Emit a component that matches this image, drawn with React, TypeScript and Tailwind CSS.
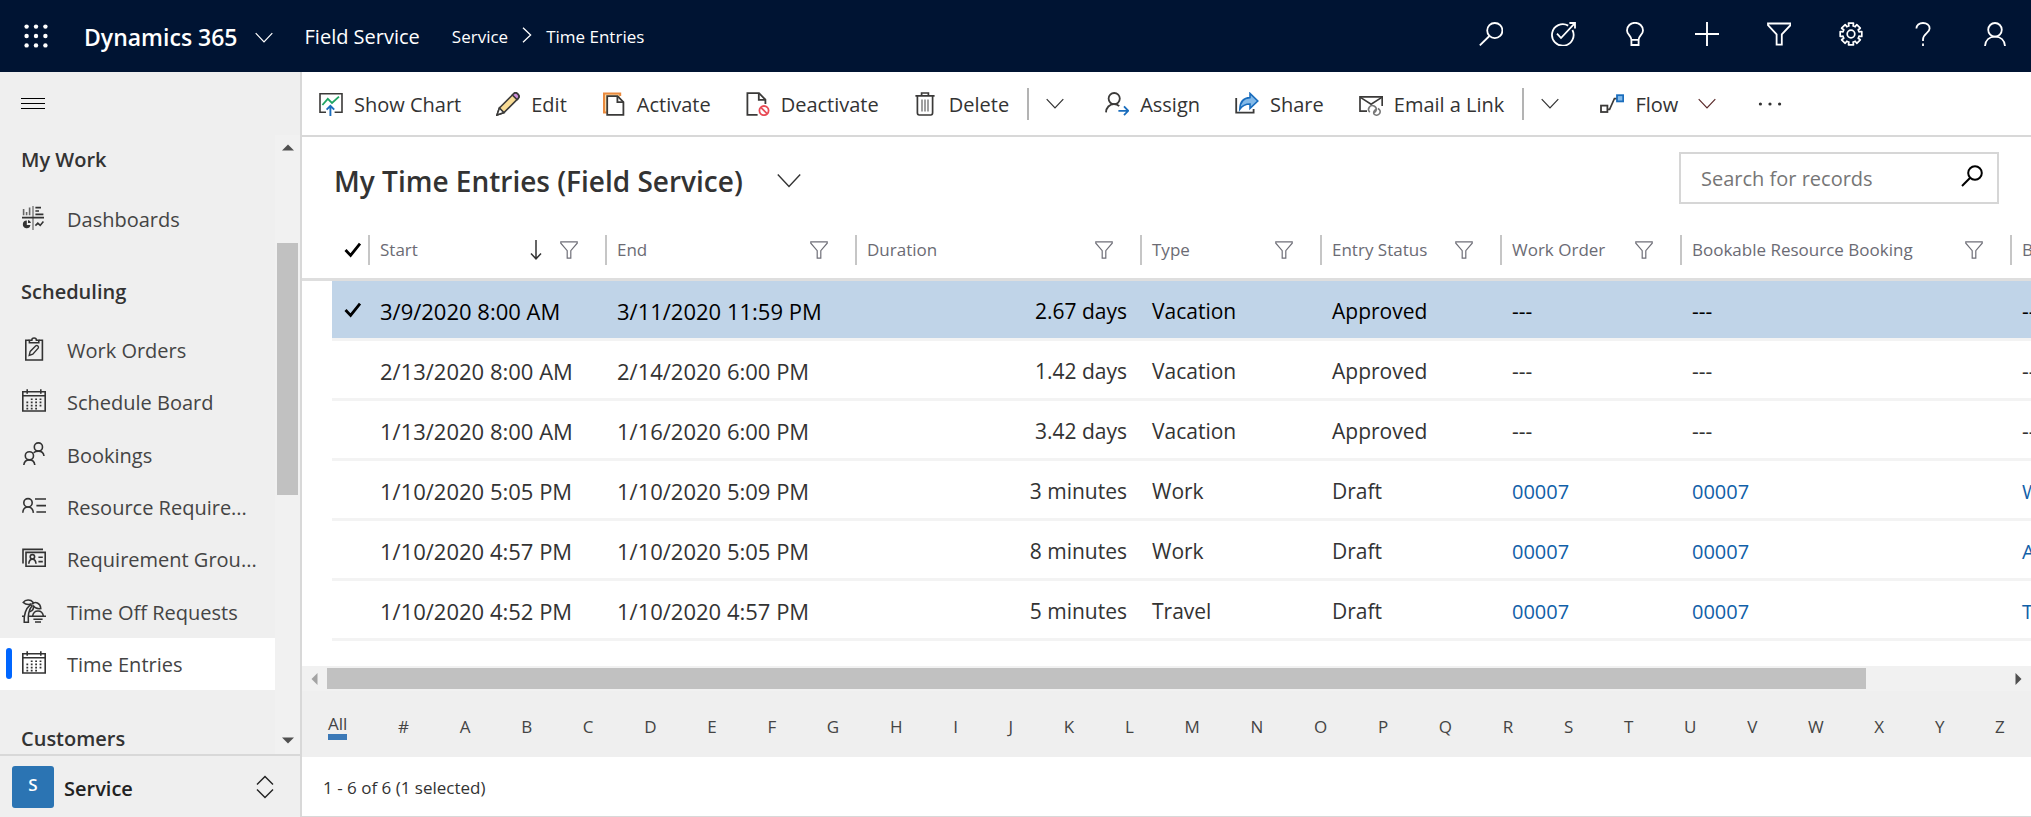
import type { ReactNode } from "react";
import clsx from "clsx";

type IconProps = { children: ReactNode; className?: string; w?: number; h?: number; sw?: number };

function Icon({ children, className, w = 24, h = 24, sw = 1.6 }: IconProps) {
  return (
    <svg
      width={w}
      height={h}
      viewBox={`0 0 ${w} ${h}`}
      fill="none"
      stroke="currentColor"
      strokeWidth={sw}
      aria-hidden="true"
      className={clsx("block shrink-0", className)}
    >
      {children}
    </svg>
  );
}

const ChevronDown = ({ className }: { className?: string }) => (
  <Icon w={18} h={12} sw={1.2} className={className}>
    <path d="M0.7 1.2 9 10 17.3 1.2" />
  </Icon>
);

const Funnel = () => (
  <Icon w={18} h={18} sw={1.2} className="text-[#6f6f78]">
    <path d="M0.8 0.8H17.2V2.2L10.8 9.6V17.2H7.2V9.6L0.8 2.2Z" />
  </Icon>
);

const Check = () => (
  <Icon w={18} h={16} sw={2.8} className="text-black">
    <path d="M1.5 8 6.6 13.4 16 1.6" />
  </Icon>
);

const topActions: { label: string; icon: ReactNode }[] = [
  {
    label: "Search",
    icon: (
      <Icon sw={1.8}>
        <circle cx="15.8" cy="8.6" r="7.6" />
        <path d="M10.4 14 0.8 23.4" />
      </Icon>
    ),
  },
  {
    label: "Task flow",
    icon: (
      <Icon w={26} h={24} sw={1.8}>
        <path d="M18.2 3.6A10.8 10.8 0 1 0 22.4 8" />
        <path d="M7 11.6 11 16 24.2 1.8M19.4 1H25V6.6" />
      </Icon>
    ),
  },
  {
    label: "Assistant",
    icon: (
      <Icon w={18} sw={1.8}>
        <path d="M5.4 17.8C5.4 13.6 1 12.6 1 8.4A8 7.6 0 0 1 17 8.4C17 12.6 12.6 13.6 12.6 17.8ZM5.4 17.8V23H12.6V17.8" />
      </Icon>
    ),
  },
  {
    label: "Quick create",
    icon: (
      <Icon sw={1.9}>
        <path d="M12 0V24M0 12H24" />
      </Icon>
    ),
  },
  {
    label: "Advanced find",
    icon: (
      <Icon sw={1.8}>
        <path d="M1 1.5H23.4V3.2L14.8 12.4V22.6H9.6V12.4L1 3.2Z" />
      </Icon>
    ),
  },
  {
    label: "Settings",
    icon: (
      <Icon sw={1.7}>
        <path d="M9.9 4 9.5 1.2 14.5 1.2 14.1 4A8.3 8.3 0 0 1 16.2 4.8L17.8 2.6 21.3 6.2 19.2 7.8A8.3 8.3 0 0 1 20 9.9L22.8 9.5 22.8 14.5 20 14.1A8.3 8.3 0 0 1 19.2 16.2L21.3 17.8 17.8 21.3 16.2 19.2A8.3 8.3 0 0 1 14.1 20L14.5 22.8 9.5 22.8 9.9 20A8.3 8.3 0 0 1 7.8 19.2L6.2 21.3 2.6 17.8 4.8 16.2A8.3 8.3 0 0 1 4 14.1L1.2 14.5 1.2 9.5 4 9.9A8.3 8.3 0 0 1 4.8 7.8L2.6 6.2 6.2 2.6 7.8 4.8A8.3 8.3 0 0 1 9.9 4Z" strokeLinejoin="round" />
        <circle cx="12" cy="12" r="3.8" />
      </Icon>
    ),
  },
  {
    label: "Help",
    icon: (
      <Icon w={16} sw={1.8}>
        <path d="M1.4 6.6C1.4 3.2 4.2 1 8 1S14.6 3.2 14.6 6.4C14.6 11 8 11.4 8 17.6V19M8 21.4V24" />
      </Icon>
    ),
  },
  {
    label: "Account",
    icon: (
      <Icon w={22} sw={1.8}>
        <circle cx="11" cy="7.8" r="6.8" />
        <path d="M1 24C1.4 18 5.4 14.6 11 14.6S20.6 18 21 24" />
      </Icon>
    ),
  },
];

const ic = {
  chart: (
    <Icon className="text-[#3b3a39]">
      <path d="M7 20.2H1V1.8H23V20.2H15.6" />
      <path d="M3.4 13 8.8 6.8 13 11 20 4.6" stroke="#1fa463" strokeWidth="1.8" />
      <path d="M11.4 24V14M7.6 17.6 11.4 13.8 15.2 17.6" stroke="#1a6dbd" strokeWidth="1.9" />
    </Icon>
  ),
  edit: (
    <Icon className="text-[#3b3a39]">
      <path d="M3.4 16 17.4 2C18.6 0.8 20.4 0.7 21.8 2.1S23.2 5.4 22 6.6L8 20.6 1 23Z" fill="#f9dc95" />
      <path d="M16.4 3 17.4 2C18.6 0.8 20.4 0.7 21.8 2.1S23.2 5.4 22 6.6L21 7.6Z" fill="#cf8fdc" />
      <path d="M3.4 16 1 23 8 20.6Z" fill="#fff" />
    </Icon>
  ),
  activate: (
    <Icon className="text-[#3b3a39]">
      <path d="M4.6 20.4H2V1.4H18.2V4" stroke="#ea8a3e" strokeWidth="2" fill="#fbd9a5" />
      <path d="M5.2 4.2H15.6L21.4 10V22.8H5.2Z" fill="#fff" strokeWidth="1.8" />
      <path d="M15.4 4.2V10.2H21.4" strokeWidth="1.8" />
    </Icon>
  ),
  deactivate: (
    <Icon className="text-[#3b3a39]">
      <path d="M11.6 22.8H1.4V1.2H13L19.4 7.6V12" strokeWidth="1.8" />
      <path d="M12.8 1.2V7.8H19.4" strokeWidth="1.8" />
      <circle cx="18" cy="18.6" r="4.6" stroke="#e84a55" strokeWidth="1.8" />
      <path d="M14.8 15.4 21.2 21.8" stroke="#e84a55" strokeWidth="1.8" />
    </Icon>
  ),
  trash: (
    <Icon className="text-[#3b3a39]">
      <path d="M1.4 3.8H20.6M7.6 3.6V1H14.4V3.6M3.4 4V20.8Q3.4 23 5.2 23H16.8Q18.6 23 18.6 20.8V4" strokeWidth="1.7" />
      <path d="M8 7.6V19.4M11 7.6V19.4M14 7.6V19.4" stroke="#777" strokeWidth="1.4" />
    </Icon>
  ),
  assign: (
    <Icon className="text-[#3b3a39]">
      <circle cx="9.2" cy="6.6" r="5.6" strokeWidth="1.8" />
      <path d="M1 20.4C1.2 15.6 4.4 12.2 9 12.2 11.4 12.2 13 13 14.2 14.2" strokeWidth="1.8" />
      <path d="M13.4 18.8H23M19 14.4 23.2 18.8 19 23.2" stroke="#1a6dbd" strokeWidth="1.8" />
    </Icon>
  ),
  share: (
    <Icon className="text-[#3b3a39]">
      <path d="M1.2 6V20.6H18.6V17" strokeWidth="1.8" />
      <path d="M4.8 17.2C5 9.6 9 5.8 15 5.6V1.4L22.8 9 15 16.4V12C10.6 12 7.4 13.4 4.8 17.2Z" fill="#83b9e8" stroke="#1a6dbd" />
    </Icon>
  ),
  mail: (
    <Icon className="text-[#3b3a39]">
      <path d="M8 19.2H1V4.8H23.2V14" strokeWidth="1.7" />
      <path d="M1.4 5.4 12.1 12.2 22.8 5.4" />
      <path d="M10.8 20.2A3.8 3.8 0 1 1 17 18.6C16.6 19.6 15.8 20.2 14.8 20.4" stroke="#777" />
      <path d="M18.8 16.4A3.5 3.5 0 1 1 15 22C14.2 20.2 15.2 18 17.2 17.6" stroke="#777" />
    </Icon>
  ),
  flow: (
    <Icon className="text-[#3b3a39]">
      <rect x="1" y="13.6" width="6.4" height="6.4" strokeWidth="1.8" />
      <path d="M7.8 17.4H9.6L14.4 6.6H17" />
      <rect x="17" y="3.2" width="6.2" height="6.2" fill="#83b9e8" stroke="#1a6dbd" strokeWidth="1.8" />
    </Icon>
  ),
};

function Command({ icon, label }: { icon: ReactNode; label: string }) {
  return (
    <button type="button" className="flex items-center gap-[11px] whitespace-nowrap">
      {icon}
      <span className="pt-[2px]">{label}</span>
    </button>
  );
}

function Split({ label }: { label: string }) {
  return (
    <div className="flex items-center">
      <span className="ml-[18px] h-8 w-[2px] bg-[#b3b3b3]" />
      <button type="button" aria-label={label} className="flex h-8 w-13 items-center justify-center">
        <ChevronDown />
      </button>
    </div>
  );
}

const calendar = (
  <Icon>
    <path d="M0.8 2.8H23.2V22H0.8ZM0.8 6.8H23.2M5.2 0.2V4.8M18.8 0.2V4.8" />
    <path d="M8.8 10.2H10.6M13.2 10.2H15M17.6 10.2H19.4M4.4 13.4H6.2M8.8 13.4H10.6M13.2 13.4H15M17.6 13.4H19.4M4.4 16.6H6.2M8.8 16.6H10.6M13.2 16.6H15M17.6 16.6H19.4M4.4 19.6H6.2M8.8 19.6H10.6M13.2 19.6H15" />
  </Icon>
);

const schedulingItems: { label: string; icon: ReactNode; active?: boolean }[] = [
  {
    label: "Work Orders",
    icon: (
      <Icon>
        <path d="M7.4 3.2H3.8V23H20.4V3.2H16.8" />
        <path d="M7.4 5.8V3.2H9.8C9.8 0.2 14.4 0.2 14.4 3.2H16.8V5.8Z" />
        <path d="M7.2 18.4 8.2 14.4 13.8 8.8C15.2 7.8 17.2 9.6 16.2 11.2L10.8 17.2Z" strokeWidth="1.4" />
      </Icon>
    ),
  },
  { label: "Schedule Board", icon: calendar },
  {
    label: "Bookings",
    icon: (
      <Icon>
        <circle cx="16.4" cy="5" r="4.1" />
        <circle cx="7.4" cy="13.8" r="4.1" />
        <path d="M1.8 23C2.2 19.8 4.2 17.9 7.4 17.9S12.4 19.8 12.8 23M11.6 10.8C12.8 9.6 14.4 9.1 16.4 9.1 19.6 9.1 21.6 11 22 14" />
      </Icon>
    ),
  },
  {
    label: "Resource Require...",
    icon: (
      <Icon>
        <circle cx="6" cy="8.8" r="4.2" />
        <path d="M0.8 18.8C1 15.4 3 13 6 13S11 15.4 11.4 18.8M13 5H24M14.4 11.6H24M14.4 18H24" />
      </Icon>
    ),
  },
  {
    label: "Requirement Grou...",
    icon: (
      <Icon>
        <path d="M4 6.4H23.2V20.2H4ZM1 17.4V3.4H21" />
        <circle cx="10.4" cy="10.8" r="2.2" />
        <path d="M6.8 17.8C7 14.8 8.4 13.2 10.4 13.2S13.8 14.8 14 17.8M16.4 11.2H20.8M16.4 15.6H20.8" />
      </Icon>
    ),
  },
  {
    label: "Time Off Requests",
    icon: (
      <Icon sw={1.5}>
        <path d="M2.2 23.2C1.8 17 3.4 10 8.4 5.6L10 6.8C6.8 11 5.8 17 6.4 23.2Z" />
        <path d="M9.6 4.8C6.6 6 3.2 5.2 1.2 3.4 3.4 0.4 8.6 0.2 11 3.2L10.4 5.4C13 1.8 18.4 4 18.8 9.6 15.4 10.2 12.6 8.8 11 6.4M11 6.4C12 9 10.6 11.6 7.6 12.8" />
        <path d="M0 17.2H3M6.2 17.2H24M10.6 17C11.2 13.6 13.4 12 16 12S20.8 13.6 21.4 17M11.4 20.2H20.6M13 23H19" />
      </Icon>
    ),
  },
  { label: "Time Entries", icon: calendar, active: true },
];

const dashboardIcon = (
  <Icon>
    <path d="M11 0V24" stroke="#888" />
    <path d="M0 11.6H22M13.4 1.6H19M13.4 5H17M13.4 8.4H21.4" strokeWidth="1.6" />
    <path d="M1.6 3V9.2M4.6 6V9.2M7.6 1.6V9.2" stroke="#666" />
    <path d="M4.8 14.6A3.8 3.8 0 1 0 8.4 19H4.8Z" fill="currentColor" stroke="none" />
    <path d="M6 14A3.8 3.8 0 0 1 9 17H6Z" fill="currentColor" stroke="none" />
    <path d="M13.4 19.6 15.8 17.2 18.2 19.4 21.4 15.6" />
  </Icon>
);

function NavItem({ label, icon, active }: { label: string; icon: ReactNode; active?: boolean }) {
  return (
    <li className={clsx("flex min-h-13 flex-1", active && "bg-white")}>
      <a href="#" aria-current={active ? "page" : undefined} className="relative flex flex-1 items-center gap-[21px] pl-[22px]">
        {active && <span className="absolute left-[6px] h-[31px] w-[6px] rounded-[3px] bg-[#0066ff]" />}
        <span className="pb-[2px] text-[#333]">{icon}</span>
        <span className="pt-[2px] whitespace-nowrap">{label}</span>
      </a>
    </li>
  );
}

const columns = [
  { label: "Start", sorted: true },
  { label: "End" },
  { label: "Duration" },
  { label: "Type" },
  { label: "Entry Status" },
  { label: "Work Order" },
  { label: "Bookable Resource Booking" },
  { label: "B" },
];

const rows = [
  ["3/9/2020 8:00 AM", "3/11/2020 11:59 PM", "2.67 days", "Vacation", "Approved", "---", "---", "---"],
  ["2/13/2020 8:00 AM", "2/14/2020 6:00 PM", "1.42 days", "Vacation", "Approved", "---", "---", "---"],
  ["1/13/2020 8:00 AM", "1/16/2020 6:00 PM", "3.42 days", "Vacation", "Approved", "---", "---", "---"],
  ["1/10/2020 5:05 PM", "1/10/2020 5:09 PM", "3 minutes", "Work", "Draft", "00007", "00007", "W"],
  ["1/10/2020 4:57 PM", "1/10/2020 5:05 PM", "8 minutes", "Work", "Draft", "00007", "00007", "A"],
  ["1/10/2020 4:52 PM", "1/10/2020 4:57 PM", "5 minutes", "Travel", "Draft", "00007", "00007", "T"],
];

const letters = ["#", ..."ABCDEFGHIJKLMNOPQRSTUVWXYZ"];

function TopBar() {
  return (
    <header className="flex h-18 items-center bg-[#001433] text-white">
      <button type="button" aria-label="App launcher" className="flex h-18 w-[71px] items-center justify-center">
        <Icon className="fill-white stroke-none">
          {[2.6, 12, 21.4].map((y) => [2.6, 12, 21.4].map((x) => <circle key={`${x}-${y}`} cx={x} cy={y} r="2.2" />))}
        </Icon>
      </button>
      <button type="button" className="ml-[13px] flex items-center gap-[17px] pt-[2px] text-[23px] font-semibold whitespace-nowrap">
        Dynamics 365
        <ChevronDown className="mt-[2px]" />
      </button>
      <a href="#" className="ml-8 pt-[2px] text-[20px] whitespace-nowrap">Field Service</a>
      <nav aria-label="Breadcrumb" className="ml-8 flex items-center pt-[2px] text-[17px] whitespace-nowrap">
        <a href="#">Service</a>
        <Icon w={10} h={16} sw={1.3} className="mx-[14px] mb-1">
          <path d="M1 0.8 8.6 8 1 15.2" />
        </Icon>
        <a href="#">Time Entries</a>
      </nav>
      <div className="ml-auto flex pb-1">
        {topActions.map((a) => (
          <button key={a.label} type="button" aria-label={a.label} className="flex h-10 w-18 items-center justify-center">
            {a.icon}
          </button>
        ))}
      </div>
    </header>
  );
}

function Sidebar() {
  return (
    <aside className="flex w-[302px] shrink-0 flex-col border-r-2 border-[#d8d8d8] bg-[#efefef] text-[20px] text-[#444]">
      <div className="flex h-[63px] items-center pl-[21px]">
        <button type="button" aria-label="Collapse navigation" className="text-black">
          <Icon h={14} sw={1}>
            <path d="M0 1.5H24M0 6.5H24M0 11.5H24" />
          </Icon>
        </button>
      </div>
      <div className="flex flex-1">
        <nav aria-label="Site map" className="flex flex-1 flex-col">
          <h2 className="flex h-[50px] items-center pl-[21px] font-semibold text-[#333]">My Work</h2>
          <ul className="flex h-[67px] flex-col">
            <NavItem label="Dashboards" icon={dashboardIcon} />
          </ul>
          <h2 className="flex h-[72px] items-center pt-2 pl-[21px] font-semibold text-[#333]">Scheduling</h2>
          <ul className="flex h-[366px] flex-col">
            {schedulingItems.map((item) => (
              <NavItem key={item.label} {...item} />
            ))}
          </ul>
          <h2 className="mt-auto flex h-[30px] items-center pl-[21px] font-semibold text-[#333]">Customers</h2>
        </nav>
        <div className="flex w-[25px] flex-col items-center bg-[#f1f1f1]">
          <svg width="12" height="7" className="mt-[9px] mb-[92px] block fill-[#505050]" aria-hidden="true">
            <path d="M0 6.5 6 0.5 12 6.5Z" />
          </svg>
          <span className="h-[252px] w-[21px] bg-[#c1c1c1]" />
          <svg width="12" height="7" className="mt-auto mb-[10px] block fill-[#505050]" aria-hidden="true">
            <path d="M0 0.5 6 6.5 12 0.5Z" />
          </svg>
        </div>
      </div>
      <button type="button" className="flex h-[63px] items-center border-t-2 border-[#d8d8d8] pr-[26px] pl-3 text-[#222]">
        <span className="flex size-[42px] items-center justify-center rounded-[3px] bg-[#2b74b3] pb-1 text-[17px] font-semibold text-white">S</span>
        <span className="ml-[10px] pt-1 font-semibold">Service</span>
        <Icon w={18} h={24} sw={1.4} className="ml-auto">
          <path d="M1 9.6 9 1.4 17 9.6M1 14.6 9 22.6 17 14.6" />
        </Icon>
      </button>
    </aside>
  );
}

function CommandBar() {
  return (
    <div role="toolbar" aria-label="Commands" className="flex h-[65px] shrink-0 items-center border-b-2 border-[#d8d8d8] pl-[17px] text-[20px] text-[#333]">
      <div className="flex items-center gap-[35px]">
        <Command icon={ic.chart} label="Show Chart" />
        <Command icon={ic.edit} label="Edit" />
        <Command icon={ic.activate} label="Activate" />
        <Command icon={ic.deactivate} label="Deactivate" />
        <Command icon={ic.trash} label="Delete" />
      </div>
      <Split label="More delete options" />
      <div className="ml-6 flex items-center gap-[35px]">
        <Command icon={ic.assign} label="Assign" />
        <Command icon={ic.share} label="Share" />
        <Command icon={ic.mail} label="Email a Link" />
      </div>
      <Split label="More link options" />
      <div className="ml-6 flex items-center gap-5">
        <Command icon={ic.flow} label="Flow" />
        <button type="button" aria-label="Flow options" className="text-[#5b2b2b]">
          <ChevronDown />
        </button>
      </div>
      <button type="button" aria-label="More commands" className="ml-[42px]">
        <Icon h={4} className="fill-[#333] stroke-none">
          <circle cx="2.4" cy="2" r="1.6" />
          <circle cx="12" cy="2" r="1.6" />
          <circle cx="21.6" cy="2" r="1.6" />
        </Icon>
      </button>
    </div>
  );
}

function Grid() {
  return (
    <div className="flex-1 overflow-hidden">
      <table className="w-[1908px] min-w-full table-fixed border-separate border-spacing-0 text-left">
        <colgroup>
          <col className="w-[30px]" />
          <col className="w-[36px]" />
          <col className="w-[237px]" />
          <col className="w-[250px]" />
          <col className="w-[285px]" />
          <col className="w-[180px]" />
          <col className="w-[180px]" />
          <col className="w-[180px]" />
          <col className="w-[330px]" />
          <col />
        </colgroup>
        <thead>
          <tr className="h-[60px] text-[17px] text-[#6b6b74]">
            <td className="border-b-3 border-[#dedede]" />
            <th className="border-b-3 border-[#dedede] p-0 pl-3" aria-label="Selected">
              <Check />
            </th>
            {columns.map((c) => (
              <th key={c.label} className="border-b-3 border-[#dedede] p-0 font-normal">
                <div className="flex h-[30px] items-center border-l-2 border-[#c6c6c6] pr-[27px] pl-[10px] whitespace-nowrap">
                  {c.label}
                  <span className="ml-auto flex items-center gap-[18px]">
                    {c.sorted && (
                      <Icon w={12} h={20} sw={1.5} className="text-[#333]">
                        <path d="M6 0V19M1 13.6 6 18.8 11 13.6" />
                      </Icon>
                    )}
                    <Funnel />
                  </span>
                </div>
              </th>
            ))}
          </tr>
        </thead>
        <tbody>
          {rows.map((row, r) => (
            <tr key={row[0]} className={clsx("h-[60px] text-[21px]", r === 0 ? "text-black" : "text-[#333]")}>
              <td />
              <td className={clsx("border-b-3 border-[#f3f3f3] p-0 pl-3", r === 0 && "bg-[#c0d4e8]")}>{r === 0 && <Check />}</td>
              {row.map((cell, c) => (
                <td
                  key={columns[c].label}
                  className={clsx(
                    "border-b-3 border-[#f3f3f3] pt-1 pb-0 pl-3 whitespace-nowrap",
                    c < 2 && "text-[22px]",
                    c === 2 && "pr-[13px] text-right",
                    r === 0 && "bg-[#c0d4e8]",
                  )}
                >
                  {c > 4 && r > 2 ? (
                    <a href="#" className="text-[20px] text-[#1160a8]">{cell}</a>
                  ) : (
                    cell
                  )}
                </td>
              ))}
            </tr>
          ))}
        </tbody>
      </table>
    </div>
  );
}

export default function App() {
  return (
    <div className="flex min-h-screen flex-col bg-white font-['Open_Sans','Noto_Sans',sans-serif]">
      <TopBar />
      <div className="flex flex-1">
        <Sidebar />
        <main className="flex min-w-0 flex-1 flex-col border-b border-[#d8d8d8]">
          <CommandBar />
          <div className="flex h-[84px] shrink-0 items-center pt-1 pr-8 pl-8">
            <button type="button" className="flex items-center gap-[34px] text-[28px] text-[#333]">
              <h1 className="font-semibold whitespace-nowrap">My Time Entries (Field Service)</h1>
              <Icon w={24} h={16} sw={1.4}>
                <path d="M0.8 1.4 12 13.4 23.2 1.4" />
              </Icon>
            </button>
            <form role="search" className="mb-[6px] ml-auto flex h-[52px] w-80 items-center border-2 border-[#d6d6d6] pr-[14px] pl-5">
              <input
                type="text"
                aria-label="Search for records"
                placeholder="Search for records"
                className="min-w-0 flex-1 pt-[2px] text-[20px] outline-none placeholder:text-[#767676]"
              />
              <button type="button" aria-label="Search" className="pb-1 text-black">
                <Icon w={22} h={22} sw={2}>
                  <circle cx="14" cy="8" r="6.8" />
                  <path d="M9.2 12.8 1 21" />
                </Icon>
              </button>
            </form>
          </div>
          <Grid />
          <div className="flex h-[25px] shrink-0 items-center bg-[#f1f1f1]">
            <span className="flex w-[25px] justify-center">
              <svg width="7" height="12" className="block fill-[#a3a3a3]" aria-hidden="true">
                <path d="M6.5 0 0.5 6 6.5 12Z" />
              </svg>
            </span>
            <span className="h-[21px] grow-11 bg-[#c1c1c1]" />
            <span className="grow" />
            <span className="flex w-[25px] justify-center">
              <svg width="7" height="12" className="block fill-[#505050]" aria-hidden="true">
                <path d="M0.5 0 6.5 6 0.5 12Z" />
              </svg>
            </span>
          </div>
          <nav aria-label="Filter by letter" className="flex h-[66px] shrink-0 items-center justify-between bg-[#efefef] px-[26px] text-[17px] text-[#444]">
            <a href="#" className="mt-[6px] border-b-6 border-[#3b79b7] leading-5">All</a>
            {letters.map((l) => (
              <a key={l} href="#" className="pt-[6px]">{l}</a>
            ))}
          </nav>
          <div className="flex h-[59px] shrink-0 items-center pt-[2px] pl-[21px] text-[17px] text-[#333]">1 - 6 of 6 (1 selected)</div>
        </main>
      </div>
    </div>
  );
}
